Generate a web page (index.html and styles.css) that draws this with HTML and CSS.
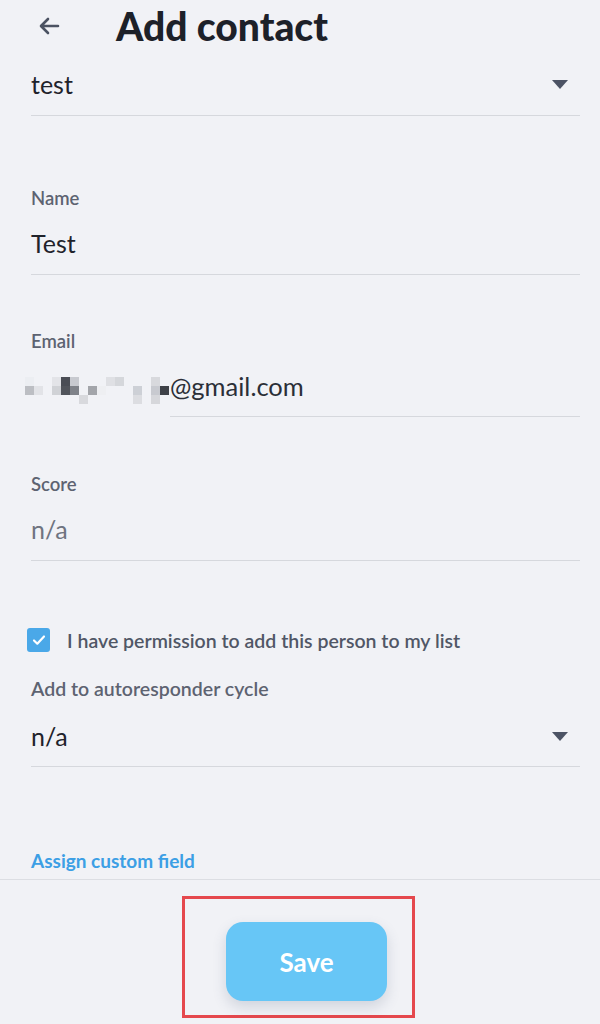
FILE: index.html
```html
<!DOCTYPE html>
<html lang="en">
<head>
    <meta charset="UTF-8">
    <meta name="viewport" content="width=device-width, initial-scale=1.0">
    <title>Add contact</title>
    <link rel="stylesheet" href="styles.css">
</head>
<body>
    <header class="topbar">
        <svg class="back" width="22" height="18" viewBox="0 0 22 18">
            <path d="M20 9H4M10 2L3 9l7 7" fill="none" stroke="#4b5262" stroke-width="2.6" stroke-linecap="round" stroke-linejoin="round"/>
        </svg>
        <h1>Add contact</h1>
    </header>

    <main class="form">
        <!-- list -->
        <div class="field select first">
            <span class="value">test</span>
            <span class="caret"></span>
        </div>

        <div class="field second">
            <div class="label">Name</div>
            <div class="value">Test</div>
        </div>

        <div class="field email-field">
            <div class="label">Email</div>
            <div class="value email">
                <span class="blur">
                    <i style="background:#eceef2"></i><i></i><i></i><i style="background:#e3e4e8"></i><i style="background:#4a4d55"></i><i style="background:#c8cad0"></i><i></i><i></i><i></i><i style="background:#dfe0e4"></i><i style="background:#d5d7db"></i><i></i><i></i><i></i><i style="background:#d8d9dd"></i><i></i>
                    <i style="background:#bcbec3"></i><i style="background:#e2e3e7"></i><i></i><i style="background:#d0d2d6"></i><i style="background:#51545b"></i><i style="background:#7f8289"></i><i></i><i style="background:#a3a5aa"></i><i style="background:#eeeff2"></i><i></i><i></i><i></i><i style="background:#cdd0d6"></i><i></i><i style="background:#c8cad0"></i><i style="background:#3e4148"></i>
                    <i></i><i></i><i></i><i></i><i></i><i></i><i style="background:#d8d9dd"></i><i></i><i></i><i></i><i></i><i></i><i style="background:#dcdde1"></i><i></i><i style="background:#d6d7db"></i><i></i>
                </span>@gmail.com
            </div>
        </div>

        <div class="field">
            <div class="label">Score</div>
            <div class="value muted">n/a</div>
        </div>

        <label class="check">
            <span class="box">
                <svg width="14" height="12" viewBox="0 0 14 12"><path d="M2 6.5l3.3 3.2L12 2.5" fill="none" stroke="#fff" stroke-width="2.2" stroke-linecap="round" stroke-linejoin="round"/></svg>
            </span>
            I have permission to add this person to my list
        </label>

        <div class="field select cycle">
            <div class="label big">Add to autoresponder cycle</div>
            <div class="row">
                <span class="value">n/a</span>
                <span class="caret"></span>
            </div>
        </div>

        <a class="custom" href="#">Assign custom field</a>
    </main>

    <footer class="bottom">
        <div class="mark">
            <button class="save">Save</button>
        </div>
    </footer>
</body>
</html>
```

FILE: styles.css
```css
body {
    font-family: Lato, "Open Sans", sans-serif;
    background-color: #f1f2f6;
    color: #1f232b;
    margin: 0;
    padding: 0;
}
.topbar {
    display: flex;
    align-items: center;
    height: 52px;
    padding-left: 38px;
}
.topbar h1 {
    margin: 0 0 0 56px;
    font-size: 39px;
    font-weight: 900;
    color: #1d2129;
}
.form {
    padding: 0 20px 8px 31px;
    border-bottom: 1px solid #dcdee3;
}
.field {
    margin-top: 56px;
    padding-bottom: 16px;
    border-bottom: 1px solid #d6d8dd;
}
.field.first {
    margin-top: 17px;
}
.field.second {
    margin-top: 72px;
}
.email-field {
    border-bottom-color: transparent;
    background: linear-gradient(#d6d8dd, #d6d8dd) no-repeat right bottom / calc(100% - 139px) 1px;
}
.select,
.row {
    display: flex;
    align-items: center;
    justify-content: space-between;
}
.cycle {
    display: block;
    margin-top: 26px;
    padding-bottom: 15px;
}
.label {
    font-size: 18.5px;
    line-height: 20px;
    font-weight: 600;
    color: #5d6371;
    margin-bottom: 20px;
}
.label.big {
    font-size: 19.5px;
    line-height: 22px;
    margin-bottom: 21px;
}
.value {
    font-size: 25px;
    line-height: 30px;
    color: #1f232b;
}
.value.muted {
    color: #6f7480;
}
.email {
    display: flex;
    align-items: center;
    height: 30px;
    margin-left: -6px;
    color: #2b2f38;
    font-size: 25.5px;
}
.blur {
    display: grid;
    grid-template-columns: repeat(16, 9px);
    grid-auto-rows: 9px;
    align-self: flex-start;
    margin-top: 6px;
    margin-right: 1px;
}
.caret {
    width: 0;
    height: 0;
    border-left: 8px solid transparent;
    border-right: 8px solid transparent;
    border-top: 9px solid #4c5364;
    margin-right: 12px;
}
.check {
    display: flex;
    align-items: center;
    margin-top: 67px;
    font-size: 19.5px;
    font-weight: 600;
    color: #505766;
}
.box {
    display: flex;
    align-items: center;
    justify-content: center;
    width: 23px;
    height: 24px;
    border-radius: 3px;
    background-color: #4aa8e8;
    margin-left: -4px;
    margin-right: 17px;
}
.custom {
    display: block;
    margin-top: 84px;
    font-size: 19px;
    line-height: 20px;
    font-weight: 700;
    color: #3c9fe5;
    text-decoration: none;
}
.bottom {
    display: flex;
    justify-content: center;
    padding-top: 16px;
    padding-right: 3px;
}
.mark {
    width: 227px;
    height: 116px;
    border: 3px solid #e5484d;
    display: flex;
    align-items: flex-start;
}
.save {
    margin: 23px 0 0 41px;
    width: 161px;
    height: 79px;
    border: none;
    border-radius: 17px;
    background-color: #67c6f6;
    color: #fff;
    font-family: Lato, sans-serif;
    font-size: 26px;
    font-weight: 700;
    box-shadow: 0 6px 14px rgba(60, 80, 110, 0.18);
}
```
